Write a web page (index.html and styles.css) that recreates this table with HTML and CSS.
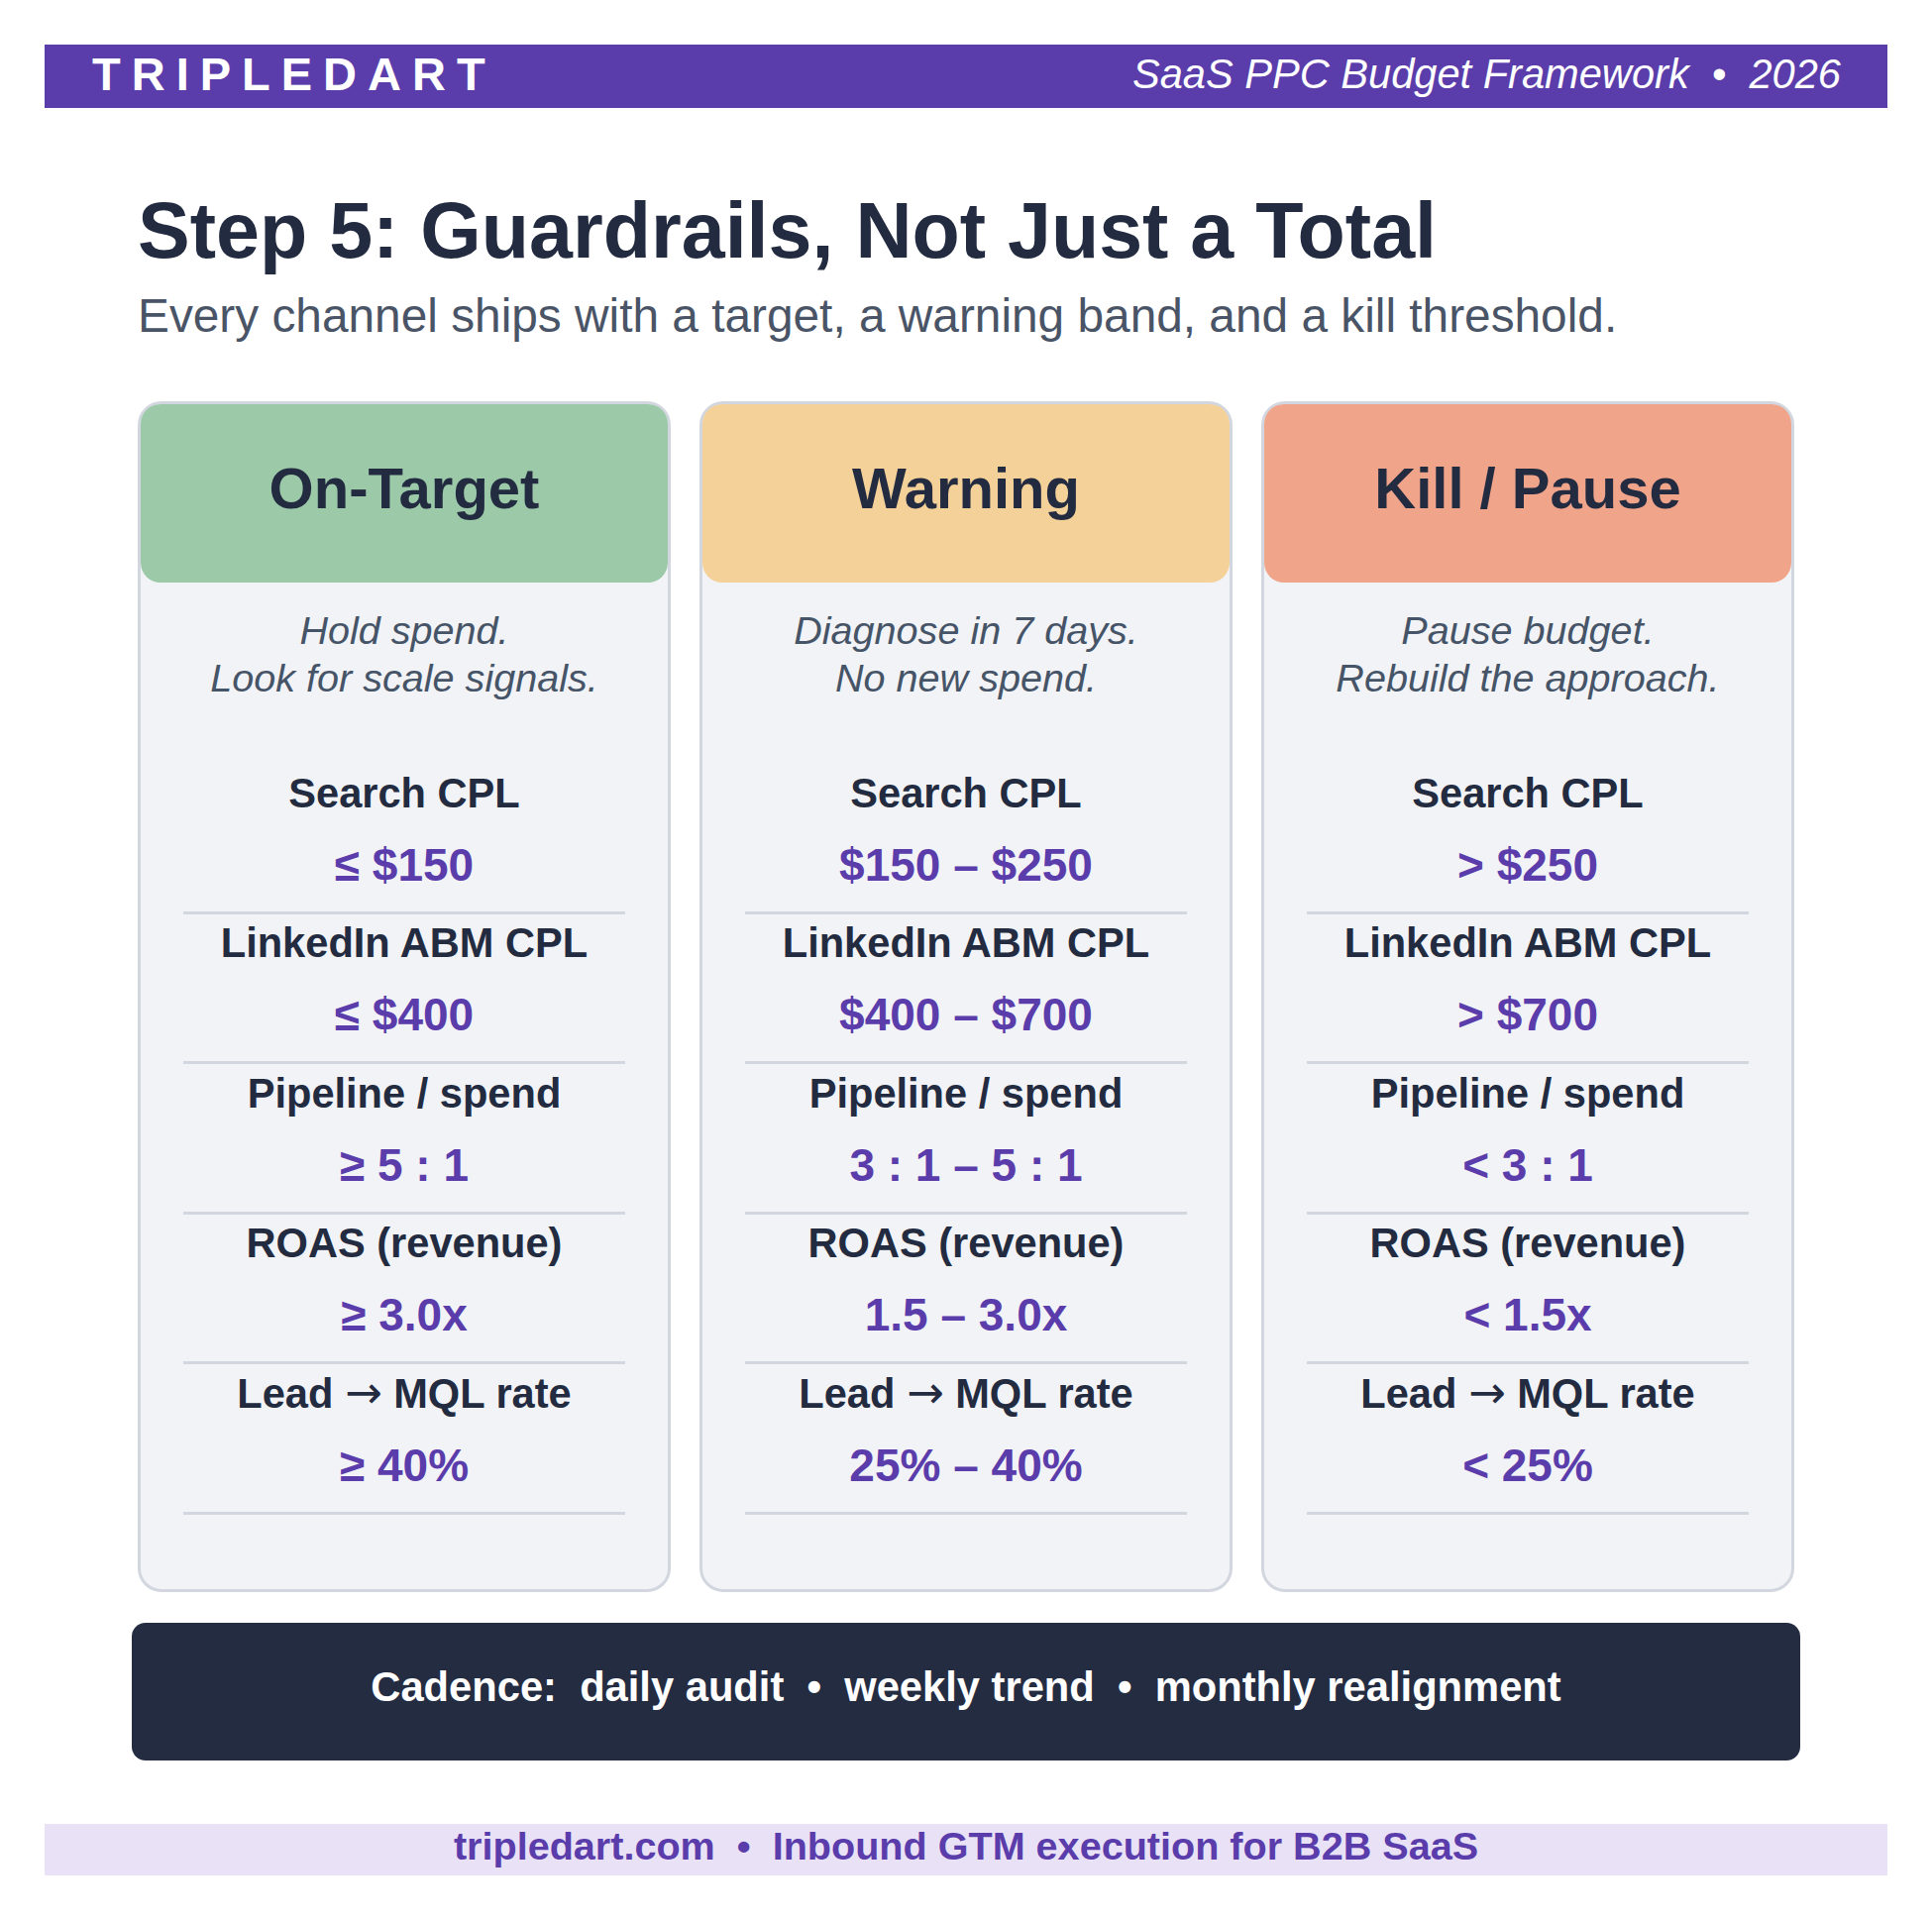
FILE: index.html
```html
<!DOCTYPE html>
<html lang="en">
<head>
<meta charset="utf-8">
<title>Step 5: Guardrails, Not Just a Total</title>
<link rel="stylesheet" href="styles.css">
</head>
<body>
<header class="topbar">
  <div class="brand">TRIPLEDART</div>
  <div class="tagline">SaaS PPC Budget Framework &nbsp;•&nbsp; 2026</div>
</header>

<main class="content">
  <h1 class="title">Step 5: Guardrails, Not Just a Total</h1>
  <p class="subtitle">Every channel ships with a target, a warning band, and a kill threshold.</p>

  <section class="cards">
    <article class="card">
      <div class="card-head green">On-Target</div>
      <p class="note">Hold spend.<br>Look for scale signals.</p>
      <div class="rows">
        <div class="row"><div class="label">Search CPL</div><div class="value">≤ $150</div></div>
        <div class="row"><div class="label">LinkedIn ABM CPL</div><div class="value">≤ $400</div></div>
        <div class="row"><div class="label">Pipeline / spend</div><div class="value">≥ 5 : 1</div></div>
        <div class="row"><div class="label">ROAS (revenue)</div><div class="value">≥ 3.0x</div></div>
        <div class="row"><div class="label">Lead <span class="arrow">→</span> MQL rate</div><div class="value">≥ 40%</div></div>
      </div>
    </article>

    <article class="card">
      <div class="card-head yellow">Warning</div>
      <p class="note">Diagnose in 7 days.<br>No new spend.</p>
      <div class="rows">
        <div class="row"><div class="label">Search CPL</div><div class="value">$150 – $250</div></div>
        <div class="row"><div class="label">LinkedIn ABM CPL</div><div class="value">$400 – $700</div></div>
        <div class="row"><div class="label">Pipeline / spend</div><div class="value">3 : 1 – 5 : 1</div></div>
        <div class="row"><div class="label">ROAS (revenue)</div><div class="value">1.5 – 3.0x</div></div>
        <div class="row"><div class="label">Lead <span class="arrow">→</span> MQL rate</div><div class="value">25% – 40%</div></div>
      </div>
    </article>

    <article class="card">
      <div class="card-head salmon">Kill / Pause</div>
      <p class="note">Pause budget.<br>Rebuild the approach.</p>
      <div class="rows">
        <div class="row"><div class="label">Search CPL</div><div class="value">&gt; $250</div></div>
        <div class="row"><div class="label">LinkedIn ABM CPL</div><div class="value">&gt; $700</div></div>
        <div class="row"><div class="label">Pipeline / spend</div><div class="value">&lt; 3 : 1</div></div>
        <div class="row"><div class="label">ROAS (revenue)</div><div class="value">&lt; 1.5x</div></div>
        <div class="row"><div class="label">Lead <span class="arrow">→</span> MQL rate</div><div class="value">&lt; 25%</div></div>
      </div>
    </article>
  </section>

  <div class="cadence">Cadence: &nbsp;daily audit &nbsp;•&nbsp; weekly trend &nbsp;•&nbsp; monthly realignment</div>
</main>

<footer class="footer">tripledart.com &nbsp;•&nbsp; Inbound GTM execution for B2B SaaS</footer>
</body>
</html>
```
FILE: styles.css
```css
* { box-sizing: border-box; }

html, body {
  margin: 0;
  padding: 0;
  background: #ffffff;
}

body {
  width: 1950px;
  font-family: "Liberation Sans", Arial, sans-serif;
  color: #232b40;
}

.topbar {
  margin: 45px 45px 0;
  height: 64px;
  background: #5a3dab;
  color: #ffffff;
  display: flex;
  align-items: center;
  justify-content: space-between;
  padding: 0 47px 5px 48px;
}

.brand {
  font-size: 47px;
  font-weight: 700;
  letter-spacing: 11px;
  line-height: 1;
}

.tagline {
  font-size: 41.6px;
  font-style: italic;
  line-height: 1;
}

.content {
  padding: 0 139px;
}

.title {
  margin: 84px 0 0;
  font-size: 79px;
  line-height: 79px;
  font-weight: 700;
  color: #232b40;
}

.subtitle {
  margin: 24px 0 0;
  font-size: 47.8px;
  line-height: 46px;
  color: #4a5467;
}

.cards {
  margin-top: 63px;
  display: grid;
  grid-template-columns: repeat(3, 1fr);
  gap: 29px;
}

.card {
  background: #f2f3f7;
  border: 3px solid #d2d6de;
  border-radius: 24px;
  padding-bottom: 75px;
}

.card-head {
  height: 180px;
  border-radius: 20px;
  padding-top: 56px;
  text-align: center;
  font-size: 58px;
  line-height: 58px;
  font-weight: 700;
  color: #232b40;
}

.green { background: #9ccaa8; }
.yellow { background: #f5d19a; }
.salmon { background: #f0a48a; }

.note {
  margin: 24px 0 0;
  text-align: center;
  font-size: 39.6px;
  line-height: 48px;
  font-style: italic;
  color: #465467;
}

.rows {
  margin: 63px 43px 0;
}

.row {
  padding-top: 8.5px;
  padding-bottom: 24px;
  border-bottom: 3px solid #d2d6de;
  text-align: center;
}

.label {
  font-size: 41.6px;
  line-height: 41px;
  font-weight: 700;
  color: #232b40;
}

.arrow {
  font-family: "DejaVu Sans", sans-serif;
  font-weight: 400;
  font-size: 45px;
  line-height: 0;
}

.value {
  margin-top: 29px;
  font-size: 46px;
  line-height: 46px;
  font-weight: 700;
  color: #5a3dab;
}

.cadence {
  margin: 31px -6px 0;
  height: 139px;
  background: #242c42;
  border-radius: 14px;
  color: #ffffff;
  text-align: center;
  font-size: 41.7px;
  line-height: 48px;
  font-weight: 700;
  padding-top: 41px;
}

.footer {
  margin: 64px 45px 0;
  height: 52px;
  background: #e9e2f7;
  color: #5a3dab;
  text-align: center;
  font-size: 39.6px;
  line-height: 44px;
  font-weight: 700;
}
```
